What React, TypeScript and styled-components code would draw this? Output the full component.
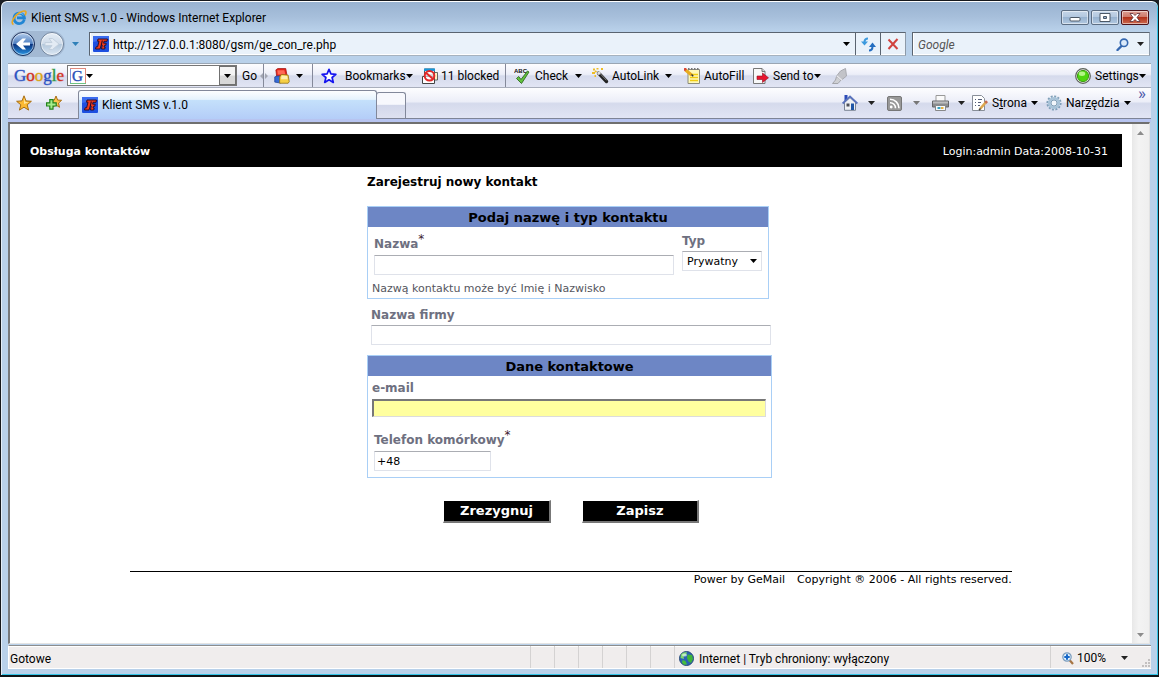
import React from 'react';
import styled, { createGlobalStyle, css } from 'styled-components';

const GlobalStyle = createGlobalStyle`
  *, *::before, *::after { box-sizing: border-box; }
  body { margin: 0; background: #1c2026; }
  button, input, select { font: inherit; color: inherit; margin: 0; }
  button { background: none; border: 0; padding: 0; }
  svg { display: block; flex: none; }
`;

const ui = "Roboto, 'Segoe UI', 'Open Sans', sans-serif";
const page = "'DejaVu Sans', Verdana, sans-serif";

/* ---------- window frame ---------- */

const Window = styled.div`
  display: flex;
  flex-direction: column;
  min-height: 100vh;
  padding: 0 7px 6px;
  border: 1px solid #16181c;
  border-bottom: 2px solid #0c1418;
  border-radius: 7px 7px 0 0;
  background: linear-gradient(#98b2d0 0, #a7bfdb 16px, #b9d1ea 30px);
  box-shadow: inset 0 1px #fff, inset 1px 0 #e4eef8, inset -1px 0 #35c5e8, inset 0 -1px #35c5e8;
  font: 12px/16px ${ui};
  color: #000;
`;

const TitleBar = styled.header`
  display: flex;
  align-items: center;
  gap: 4px;
  height: 30px;
  padding: 3px 2px 0 3px;
`;

const WindowTitle = styled.span`
  flex: 1;
`;

const WindowControls = styled.div`
  display: flex;
  gap: 2px;
`;

const WindowButton = styled.button<{ $close?: boolean }>`
  display: grid;
  place-items: center;
  width: 28px;
  height: 15px;
  border: 1px solid ${p => (p.$close ? '#4d1219' : '#5c6d82')};
  border-radius: 2px;
  background: ${p =>
    p.$close
      ? 'linear-gradient(#dc9f94 0, #cf7a6b 45%, #b3321b 50%, #cc6a50)'
      : 'linear-gradient(#c5d5e7 0, #b3c8df 45%, #98b3d0 50%, #b2c8e0)'};
  box-shadow: inset 0 0 0 1px rgba(255, 255, 255, 0.5);
`;

const NavBar = styled.div`
  display: flex;
  align-items: center;
  height: 26px;
  padding: 0 1px 0 2px;
`;

const TravelButtons = styled.div`
  display: flex;
  align-items: center;
  width: 79px;
`;

const TravelPill = styled.div`
  display: flex;
  gap: 3px;
  border-radius: 14px;
  background: #a3b9d3;
`;

const Plain = styled.button`
  display: grid;
  place-items: center;
`;

const HistoryButton = styled(Plain)`
  width: 20px;
  height: 24px;
`;

const fieldBox = css`
  display: flex;
  align-items: center;
  height: 24px;
  border: 1px solid #5a6470;
  border-right-color: #8d9aa8;
  border-bottom-color: #a6b2be;
  background: #eaf2fa;
  box-shadow: inset 0 -1px #fff, inset 1px 0 #fff;
`;

const AddressBar = styled.div`
  ${fieldBox}
  flex: 1;
  margin-right: 6px;
  padding-left: 3px;
`;

const SearchBar = styled.div`
  ${fieldBox}
  width: 238px;
  padding-left: 5px;
`;

const BarInput = styled.input<{ $hint?: boolean }>`
  flex: 1;
  min-width: 0;
  height: 20px;
  padding: 2px 0 0;
  border: 0;
  outline: 0;
  background: none;
  font-style: ${p => (p.$hint ? 'italic' : 'normal')};
  &::placeholder { color: #555; opacity: 1; }
`;

const AddressInput = styled(BarInput)`
  margin-left: 4px;
`;

const BarButton = styled(Plain)<{ $line?: boolean }>`
  width: ${p => (p.$line ? 25 : 18)}px;
  height: 22px;
  border-left: ${p => (p.$line ? '1px solid #5a6470' : '0')};
`;

/* ---------- toolbars ---------- */

const toolbar = css`
  background: linear-gradient(#fdfdff 0, #eceef8 45%, #d5daec 52%, #e2e5f4 100%);
`;

const GoogleBar = styled.div`
  ${toolbar}
  display: grid;
  grid-template-columns:
    59px 170px 21px 54px 2px 106px 85px 2px 81px 91px 69px 78px 1fr 82px;
  align-items: center;
  height: 25px;
  margin-top: 6px;
  border-top: 1px solid #9aa6b4;
  border-bottom: 1px solid #a9aebc;
`;

const GoogleWord = styled.span`
  padding-left: 6px;
  font: 17px/20px 'Liberation Serif', serif;
  -webkit-text-stroke: 1px;
  paint-order: stroke;
`;

const Letter = styled.span<{ $c: string }>`
  color: ${p => p.$c};
  -webkit-text-stroke-color: ${p => p.$c}66;
`;

const Combo = styled.div`
  display: flex;
  align-items: center;
  height: 21px;
  padding: 1px 0 1px 2px;
  border: 1px solid #777;
  background: #fff;
`;

const ComboButton = styled(Plain)`
  width: 17px;
  height: 19px;
  border: 1px solid #707070;
  background: linear-gradient(#f4f4f4 48%, #d8d8d8 52%);
`;

const ToolButton = styled.button<{ $pad?: number; $gap?: number }>`
  display: flex;
  align-items: center;
  gap: ${p => p.$gap ?? 4}px;
  height: 23px;
  padding-left: ${p => p.$pad ?? 0}px;
  white-space: nowrap;
`;

const Label = styled.span<{ $lead?: boolean }>`
  margin-left: ${p => (p.$lead ? 3 : 0)}px;
`;

const Rule = styled.span`
  width: 1px;
  height: 23px;
  background: #85899a;
`;

const TabBar = styled.div`
  ${toolbar}
  display: flex;
  align-items: flex-end;
  height: 31px;
  border-bottom: 1px solid #7e8496;
`;

const Favorites = styled.div`
  display: flex;
  align-items: center;
  gap: 14px;
  width: 70px;
  height: 30px;
  padding-left: 8px;
`;

const Tab = styled.button`
  display: flex;
  align-items: center;
  gap: 4px;
  width: 299px;
  height: 29px;
  margin-bottom: -1px;
  padding-left: 3px;
  border: 1px solid #82889a;
  border-bottom: 0;
  border-radius: 3px 3px 0 0;
  background: linear-gradient(#fdfeff 0, #e6f3fd 30%, #c4e0fb 34%, #b4cdf8 100%);
`;

const NewTab = styled.button`
  width: 30px;
  height: 26px;
  margin-left: -1px;
  border: 1px solid #82889a;
  border-bottom: 0;
  border-radius: 3px 3px 0 0;
  background: linear-gradient(#f7f8fd 45%, #d2d7ea 50%, #dee1f0);
`;

const Commands = styled.div`
  display: flex;
  justify-content: flex-end;
  flex: 1;
  height: 30px;
`;

const CommandRow = styled.div`
  display: grid;
  grid-template-columns: 45px 45px 40px 74px 92px 13px;
  align-items: center;
`;

const Chevron = styled.span`
  align-self: start;
  font-size: 17px;
  line-height: 10px;
  color: #4a55a8;
`;

const TabStrip = styled.div`
  height: 3px;
  background: #b7c4f0;
`;

/* ---------- document ---------- */

const Viewport = styled.div`
  display: flex;
  flex: 1;
  margin-right: 1px;
  border: 1px solid #8a8a8a;
  border-top: 2px solid #6f6f6f;
  border-left: 2px solid #77797c;
  border-right: 1px solid #e3e3e3;
  border-bottom: 1px solid #e3e3e3;
  background: #fff;
`;

const Scrollbar = styled.div`
  display: flex;
  flex-direction: column;
  justify-content: space-between;
  width: 17px;
  background: linear-gradient(90deg, #e8e8e8, #f3f3f3 40%, #efefef);
`;

const ScrollButton = styled(Plain)`
  height: 17px;
`;

const Document = styled.main`
  flex: 1;
  padding: 10px;
  font: 11px/14px ${page};
`;

const PageHeader = styled.div`
  display: flex;
  align-items: center;
  justify-content: space-between;
  height: 33px;
  padding: 2px 14px 0 10px;
  background: #000;
  color: #fff;
`;

const Form = styled.form`
  width: 408px;
  margin: 0 auto;
`;

const FormTitle = styled.h1`
  margin: 0;
  padding: 8px 0 17px;
  font-size: 12px;
  line-height: 14px;
`;

const Panel = styled.fieldset<{ $wide?: boolean }>`
  width: ${p => (p.$wide ? 405 : 402)}px;
  margin: 0;
  padding: 0;
  border: 1px solid #a9cff6;
`;

const PanelHeader = styled.div`
  height: 20px;
  background: #6d86c5;
  font-size: 13px;
  font-weight: bold;
  line-height: 21px;
  text-align: center;
`;

const FieldRow = styled.div`
  display: flex;
  align-items: flex-start;
  gap: 8px;
  padding: 7px 6px 0;
`;

const Field = styled.div<{ $pad?: string }>`
  display: flex;
  flex-direction: column;
  align-items: flex-start;
  padding: ${p => p.$pad ?? '0'};
`;

const FieldLabel = styled.label<{ $tall?: boolean }>`
  height: ${p => (p.$tall ? 21 : 17)}px;
  padding-top: ${p => (p.$tall ? 3 : 0)}px;
  font-size: 12px;
  font-weight: bold;
  line-height: 14px;
  color: #6e7080;
`;

const Star = styled.sup`
  font-size: 12px;
  font-weight: normal;
  line-height: 0;
  color: #402030;
`;

const TextInput = styled.input<{ $w: number }>`
  width: ${p => p.$w}px;
  height: 20px;
  padding: 0 2px;
  border: 1px solid #dfe2ea;
  border-top-color: #abadb3;
  border-radius: 1px;
  outline: 0;
  background: #fff;
`;

const EmailInput = styled(TextInput)`
  height: 18px;
  margin-top: 1px;
  border-width: 2px 1px 1px 2px;
  border-color: #777 #dcdcdc #dcdcdc #777;
  border-radius: 0;
  background: #ffff9f;
`;

const SelectWrap = styled.div`
  display: grid;
  align-items: center;
  width: 80px;
  height: 20px;
  border: 1px solid #dfe2ea;
  border-top-color: #abadb3;
  & > * { grid-area: 1 / 1; }
  & > svg { justify-self: end; margin-right: 4px; pointer-events: none; }
`;

const Select = styled.select`
  width: 100%;
  height: 18px;
  padding: 1px 0 0 4px;
  border: 0;
  outline: 0;
  appearance: none;
  background: none;
`;

const Hint = styled.p`
  margin: 0;
  padding: 7px 0 2px 4px;
  color: #55565e;
`;

const Actions = styled.div`
  display: flex;
  gap: 31px;
  padding: 22px 0 0 76px;
`;

const ActionButton = styled.button<{ $w: number }>`
  width: ${p => p.$w}px;
  height: 23px;
  border: solid;
  border-width: 1px 2px 2px 1px;
  border-color: #fff #777 #777 #fff;
  background: #000;
  color: #fff;
  font-size: 13px;
  font-weight: bold;
  line-height: 16px;
`;

const PageFooter = styled.footer`
  display: flex;
  justify-content: flex-end;
  gap: 12px;
  width: 80%;
  margin: 48px auto 0;
  padding-top: 1px;
  border-top: 1px solid #000;
`;

/* ---------- status bar ---------- */

const StatusBar = styled.footer`
  display: grid;
  grid-template-columns: 1fr repeat(6, 24px) 376px 101px;
  height: 24px;
  margin-top: 1px;
  border: 1px solid #fff;
  border-top-color: #8d8d8d;
  border-right: 0;
  background: #f0eded;
  box-shadow: inset 0 1px #fff;
`;

const StatusCell = styled.div<{ $first?: boolean }>`
  display: flex;
  align-items: center;
  gap: 5px;
  padding-top: 3px;
  padding-left: ${p => (p.$first ? 1 : 4)}px;
  border-left: ${p => (p.$first ? '0' : '1px solid #d4d2d2')};
`;

const ZoomCell = styled(StatusCell)`
  gap: 3px;
  padding-top: 2px;
  padding-left: 11px;
`;

const ZoomValue = styled.span`
  flex: 1;
`;

/* ---------- icons ---------- */

const Caret = ({ color = '#000', up = false }: { color?: string; up?: boolean }) => (
  <svg width="7" height="4" viewBox="0 0 7 4">
    <path d={up ? 'M0 4h7L3.500 0z' : 'M0 0h7L3.500 4z'} fill={color} />
  </svg>
);

const IeIcon = () => (
  <svg width="16" height="16" viewBox="0 0 16 16">
    <path d="M13.300 9.500A5.200 5.200 0 1 1 13.400 7.800H6" fill="none" stroke="#2186d4" strokeWidth="2.800" />
    <path d="M4 6.500a5 5 0 0 1 8.500-1.500" fill="none" stroke="#8bd0f8" strokeWidth="1" />
    <path d="M2.500 14.500C-1 13 3 6 8 3c3.500-2.200 7-2.800 7-.5 0 1-.5 2-1 2.800" fill="none" stroke="#e9a820" strokeWidth="1.600" />
  </svg>
);

const SiteIcon = () => (
  <svg width="16" height="16" viewBox="0 0 16 16">
    <rect width="16" height="16" rx="1" fill="#1d4fe0" />
    <path d="M0 0h16v3L0 6z" fill="#3a6cf0" />
    <path
      d="M5 3h9.500L14 5.300h-3l-.3 1.900h2.500l-.4 2.100h-1.300L11 11h1.200l-.5 2H8.500l.7-4-.9-.2L7 13H2.500l.6-2.200h1.500L6 5.200H4.500z"
      fill="#f23a1c"
      stroke="#200c28"
      strokeWidth=".9"
    />
    <path d="M9.300 4.500 8.300 9" stroke="#200c28" strokeWidth="1.100" />
  </svg>
);

const TravelIcon = ({ forward = false }: { forward?: boolean }) => (
  <svg width="26" height="26" viewBox="0 0 26 26">
    <defs>
      <linearGradient id={forward ? 'fw' : 'bk'} x2="0" y2="1">
        <stop offset="0" stopColor={forward ? '#e6eef6' : '#b8d0ee'} />
        <stop offset=".48" stopColor={forward ? '#d0dcea' : '#4f7fc0'} />
        <stop offset=".52" stopColor={forward ? '#b4c8dc' : '#0a3480'} />
        <stop offset="1" stopColor={forward ? '#dde8f4' : '#2d9be8'} />
      </linearGradient>
    </defs>
    <circle cx="13" cy="13" r="11.500" fill={`url(#${forward ? 'fw' : 'bk'})`} stroke={forward ? '#71849c' : '#1d2f58'} />
    <circle cx="13" cy="13" r="10.500" fill="none" stroke="#fff" strokeOpacity=".55" />
    <g transform={forward ? 'matrix(-1 0 0 1 26 0)' : undefined}>
      <path
        d="M20 11.500h-7l3-4h-3.500L6 13l6.500 5.500H16l-3-4h7z"
        fill={forward ? '#e3ebf4' : '#fff'}
        stroke={forward ? '#c3d0de' : 'none'}
      />
    </g>
  </svg>
);

const MinimizeIcon = () => (
  <svg width="12" height="9" viewBox="0 0 12 9"><rect x="1" y="4.500" width="10" height="3.500" rx="1" fill="#fff" stroke="#4c5866" /></svg>
);
const RestoreIcon = () => (
  <svg width="12" height="9" viewBox="0 0 12 9"><path d="M1 .5h10v8H1zM4.500 3.500h3v2h-3z" fill="#fff" fillRule="evenodd" stroke="#4c5866" /></svg>
);
const CloseIcon = () => (
  <svg width="12" height="9" viewBox="0 0 12 9"><path d="M1 .5h3l2 2 2-2h3L8 4.500l3 4H8l-2-2-2 2H1l3-4z" fill="#fff" stroke="#5b3038" strokeWidth=".8" /></svg>
);

const RefreshIcon = () => (
  <svg width="15" height="15" viewBox="0 0 15 15">
    <path d="M7 1.500C4.500 1.500 3.500 3 3.500 5" fill="none" stroke="#3d9ade" strokeWidth="2" />
    <path d="M0 4.500h7L3.500 8.500z" fill="#3d9ade" />
    <path d="M8 13.500c2.500 0 3.500-1.500 3.500-4" fill="none" stroke="#246dc0" strokeWidth="2" />
    <path d="M8 10h7l-3.500-4.500z" fill="#246dc0" />
  </svg>
);
const StopIcon = () => (
  <svg width="12" height="12" viewBox="0 0 12 12"><path d="M1.500 1.500 10.500 11M10.500 1 1.500 11" stroke="#d0433f" strokeWidth="2" /></svg>
);
const LensIcon = () => (
  <svg width="13" height="13" viewBox="0 0 13 13">
    <path d="M6 7.500 1.500 12" stroke="#3568b0" strokeWidth="2.400" strokeLinecap="round" />
    <circle cx="8" cy="4.800" r="3.700" fill="#dbeafa" stroke="#3568b0" strokeWidth="1.600" />
  </svg>
);

const GIcon = () => (
  <svg width="16" height="16" viewBox="0 0 16 16">
    <rect width="16" height="16" fill="#fff" />
    <path d="M.5 16V.5" stroke="#7b95e0" />
    <path d="M0 .5h16" stroke="#e08a7d" />
    <path d="M15.500 0v16" stroke="#e08a7d" />
    <path d="M0 15.500h16" stroke="#6fc383" />
    <text x="2" y="13" fontSize="15" fontFamily="Liberation Serif" fill="#2950b8" stroke="#2950b8" strokeWidth=".4">G</text>
  </svg>
);

const GadgetIcon = () => (
  <svg width="16" height="16" viewBox="0 0 17 17">
    <path d="M2 2 4 .6h8.500L14 9l-2 1.500H3z" fill="#e6231c" stroke="#a01510" strokeWidth=".8" />
    <path d="M3.500 2.500H11L12 7H4z" fill="#ff6a55" />
    <path d="M.8 9.500 3 8.500h4v7.500L.8 15z" fill="#356bd6" stroke="#1b3f94" strokeWidth=".8" />
    <path d="m6 9.500 2-2.700 7 .7 1.200 7-1.200 1.700H6z" fill="#f6cf45" stroke="#8e6b10" strokeWidth=".8" />
    <path d="m8 8 6 .4.5 3.600H7.500z" fill="#fdf0b0" />
  </svg>
);

const StarOutline = () => (
  <svg width="16" height="16" viewBox="0 0 16 16">
    <path d="M8 1.300 9.900 5.900l5 .4-3.800 3.200 1.200 4.900L8 11.800l-4.300 2.600 1.200-4.900L1.100 6.300l5-.4z" fill="#fff" stroke="#1414f0" strokeWidth="1.700" strokeLinejoin="round" />
  </svg>
);

const BlockedIcon = () => (
  <svg width="16" height="16" viewBox="0 0 16 16">
    <path d="M.5 8.500h12v7H.500z" fill="#fff" stroke="#444" />
    <path d="M2.500 1h10v6h-10z" fill="#fff" stroke="#444" strokeWidth=".9" />
    <path d="M2 .500h11v2.500H2z" fill="#1796d8" />
    <path d="M12.500 4.500h3v7.500h-3z" fill="#fff0c0" stroke="#444" strokeWidth=".8" />
    <circle cx="7.500" cy="7.800" r="4.800" fill="#fff" fillOpacity=".6" stroke="#e22727" strokeWidth="2" />
    <path d="m4 4.800 7 6.200" stroke="#e22727" strokeWidth="2" />
  </svg>
);

const SpellIcon = () => (
  <svg width="17" height="18" viewBox="0 0 17 18">
    <text x="0" y="6" fontSize="6" fontWeight="bold" fontFamily="Liberation Sans" fill="#111">ABC</text>
    <path d="m2.500 11.500 2.200-2 2.300 3L13.500 4l1.500 1L7.500 16.500z" fill="#63c33f" stroke="#2f6a22" strokeWidth=".9" />
  </svg>
);

const WandIcon = () => (
  <svg width="17" height="16" viewBox="0 0 17 16">
    <path d="m6.500 5 8 8.500" stroke="#222" strokeWidth="3.400" strokeLinecap="round" />
    <path d="m6 4 2 2.200" stroke="#ddd" strokeWidth="3.200" />
    <path d="m8.500 6 6 6.300" stroke="#888" strokeWidth="1" />
    <path d="M1 1.500h2M4.500.5h2M0 5h3M2.500 8H4M9 1h2M3 3l1.500 1" stroke="#edbd26" strokeWidth="1.800" />
  </svg>
);

const AutoFillIcon = () => (
  <svg width="17" height="16" viewBox="0 0 17 16">
    <path d="M4 1.500h11.500v14H4z" fill="#fff8b8" stroke="#8b8b7a" />
    <path d="M4 1h12" stroke="#777" strokeWidth="2" strokeDasharray="1.500 1.500" />
    <path d="M6 6.500h8M6 9.500h8M6 12.500h8" stroke="#f0cb10" strokeWidth="1.400" />
    <path d="m1.500 2 6 5" stroke="#e8ab1e" strokeWidth="3" />
    <path d="m0 .5 2 1.700" stroke="#d84432" strokeWidth="3" />
    <path d="m7.500 6.500 1.700 1.800" stroke="#333" strokeWidth="1.500" />
  </svg>
);

const SendIcon = () => (
  <svg width="16" height="16" viewBox="0 0 16 16">
    <path d="M.5.500H9l3 3v12H.500z" fill="#f8f8f8" stroke="#777" />
    <path d="M9 .500v3h3" fill="#ddd" stroke="#777" />
    <path d="M4 8h5.500V5l6 4.800-6 4.700v-3H4z" fill="#e8152e" stroke="#8d0e20" strokeWidth=".6" />
  </svg>
);

const MarkerIcon = () => (
  <svg width="16" height="16" viewBox="0 0 16 16">
    <path d="M8.500 3 13.500.5l1 7.500-5 4-4.500-4.500z" fill="#c2c3c8" stroke="#a9aab0" />
    <path d="m4.500 8.500 4.500 3.500-3 3.500H.500L3.500 12z" fill="#cfd0d4" stroke="#a4a5aa" />
    <path d="m5 8 5 4.200" stroke="#e8e8ec" strokeWidth="1.300" />
  </svg>
);

const StatusLight = () => (
  <svg width="16" height="16" viewBox="0 0 16 16">
    <circle cx="8" cy="8" r="7.300" fill="#eef0ea" stroke="#5c625a" strokeWidth="1.200" />
    <circle cx="8" cy="8" r="5.600" fill="#4fd60f" stroke="#3a9c12" />
    <ellipse cx="7" cy="5.700" rx="3.200" ry="2.200" fill="#b4f587" />
  </svg>
);

const goldStar = 'M8 .8 10 5.900l5.400.4-4.200 3.500 1.400 5.300L8 12.200l-4.600 2.900 1.400-5.300L.6 6.300 6 5.900z';
const FavoriteIcon = () => (
  <svg width="16" height="16" viewBox="0 0 16 16">
    <path d={goldStar} fill="#fcb932" stroke="#a86e14" strokeLinejoin="round" />
    <path d="M8 3 9.200 7l3.500.3L8 9z" fill="#ffe59a" />
  </svg>
);
const AddFavoriteIcon = () => (
  <svg width="16" height="16" viewBox="0 0 16 16">
    <path d="M10 1 11.600 5l4 .3-3.100 2.800 1 4.200L10 10l-3.600 2.300 1-4.200L4.300 5.300l4-.3z" fill="#fcc44e" stroke="#a86e14" strokeLinejoin="round" />
    <path d="M3.800 4.600h3.200v3.200h3.200v3.200H7v3.200H3.800V11H.6V7.800h3.200z" fill="#a6ec8c" stroke="#23831c" strokeWidth="1.200" />
  </svg>
);

const HomeIcon = () => (
  <svg width="16" height="16" viewBox="0 0 16 16">
    <path d="M2.500 7.500 8 2.500l5.500 5v7.800h-11z" fill="#eef0f4" stroke="#7b8494" />
    <path d="M2.500 0h3v4l-3 2.500z" fill="#2b4bb8" />
    <path d="M.6 8.500 8 1.500l7.400 7" fill="none" stroke="#5972bc" strokeWidth="1.800" />
    <path d="M9 8.500h3v6.500H9z" fill="#1f55a5" />
    <path d="M4.500 8.500h3v3h-3z" fill="#4c4f58" />
  </svg>
);
const FeedIcon = () => (
  <svg width="15" height="15" viewBox="0 0 15 15">
    <rect x=".5" y=".5" width="14" height="14" rx="1.500" fill="#989898" stroke="#777" />
    <circle cx="4.200" cy="11" r="1.400" fill="#fff" />
    <path d="M3 6.700a5.300 5.300 0 0 1 5.500 5.500M3 3.300a9 9 0 0 1 9 9" fill="none" stroke="#fff" strokeWidth="1.600" />
  </svg>
);
const PrinterIcon = () => (
  <svg width="17" height="16" viewBox="0 0 17 16">
    <path d="M4 .500h9v6H4z" fill="#fafafa" stroke="#999" />
    <path d="M.5 6h16v6H.500z" fill="#8a8b8e" stroke="#66676a" />
    <path d="M1 6.500h15v2H1z" fill="#bcbdbf" />
    <path d="M3.500 10.500h10v5h-10z" fill="#f6fafc" stroke="#888" />
    <path d="M5.500 12h3v2h-3z" fill="#36a0c0" /><path d="M9 12h2.500v2H9z" fill="#e6b040" />
  </svg>
);
const PageIcon = () => (
  <svg width="16" height="16" viewBox="0 0 16 16">
    <path d="M.5.500h9l3 3v12H.500z" fill="#fff" stroke="#888e98" />
    <path d="M3 4.500h1M6 4.500h4M3 7.500h1M6 7.500h3M3 10.500h1M6 10.500h2" stroke="#555d78" />
    <path d="m8 14 6.500-7.500" stroke="#dca850" strokeWidth="2.600" />
    <path d="m13.500 7.800 1.500-1.700" stroke="#c76a50" strokeWidth="2.600" />
    <path d="m7 15.300 1.500-1.800" stroke="#444" strokeWidth="1.400" />
  </svg>
);
const GearIcon = () => (
  <svg width="16" height="16" viewBox="0 0 16 16">
    <circle cx="8" cy="8" r="6.600" fill="none" stroke="#7f9fb8" strokeWidth="2" strokeDasharray="2 1.450" />
    <circle cx="8" cy="8" r="4.800" fill="#c8dcec" stroke="#a8c3d8" strokeWidth="2.600" />
    <circle cx="8" cy="8" r="3" fill="#f2f6fb" stroke="#6e8ea8" strokeWidth=".8" />
  </svg>
);
const GlobeIcon = () => (
  <svg width="15" height="15" viewBox="0 0 15 15">
    <circle cx="7.500" cy="7.500" r="7" fill="#2a62b4" stroke="#294a78" />
    <path d="M2 3.500C4 1 6.500.8 8 1.500L7 4 4.500 5.500 5 8 1.500 7z" fill="#7ed66a" />
    <path d="M8.500 3.500 13 4l1 4-2 4-2.500-1.500L8 7z" fill="#3eb43a" />
    <path d="m3.500 9 3 1 1.500 3.500-3 .2-2-2z" fill="#46bd3c" />
    <ellipse cx="5.500" cy="4" rx="2.500" ry="1.600" fill="#e6f7ff" fillOpacity=".65" />
  </svg>
);
const ZoomIcon = () => (
  <svg width="12" height="13" viewBox="0 0 12 13">
    <path d="m7.500 8 3.500 4" stroke="#a77543" strokeWidth="2.200" />
    <circle cx="5" cy="5" r="4.200" fill="#dff0fc" stroke="#7b9cbd" strokeWidth="1.200" />
    <path d="M5 2.300v5.400M2.300 5h5.400" stroke="#1767c8" strokeWidth="2" />
  </svg>
);
const SplitIcon = () => (
  <svg width="8" height="23" viewBox="0 0 8 23">
    <path d="M3.500 0v23" stroke="#85899a" />
    <path d="M3 9 0 12l3 3zM5 9l3 3-3 3z" fill="#a3a6b2" />
  </svg>
);
const GripIcon = () => (
  <svg width="10" height="10" viewBox="0 0 10 10">
    <path d="M7 1h2v2H7zM4 4h2v2H4zM7 4h2v2H7zM1 7h2v2H1zM4 7h2v2H4zM7 7h2v2H7z" fill="#c3c0c0" />
  </svg>
);

const Grip = styled.span`
  align-self: flex-end;
  margin-left: 10px;
`;

/* ---------- screen ---------- */

const wordmark: [string, string][] = [
  ['G', '#2a50c0'], ['o', '#d02f20'], ['o', '#dba414'], ['g', '#2a50c0'], ['l', '#2b9740'], ['e', '#d02f20'],
];

export default function App() {
  return (
    <>
      <GlobalStyle />
      <Window>
        <TitleBar>
          <IeIcon />
          <WindowTitle>Klient SMS v.1.0 - Windows Internet Explorer</WindowTitle>
          <WindowControls>
            <WindowButton aria-label="Minimize"><MinimizeIcon /></WindowButton>
            <WindowButton aria-label="Restore"><RestoreIcon /></WindowButton>
            <WindowButton aria-label="Close" $close><CloseIcon /></WindowButton>
          </WindowControls>
        </TitleBar>

        <NavBar>
          <TravelButtons>
            <TravelPill>
              <Plain aria-label="Back"><TravelIcon /></Plain>
              <Plain aria-label="Forward"><TravelIcon forward /></Plain>
            </TravelPill>
            <HistoryButton aria-label="Recent pages"><Caret color="#2f80b8" /></HistoryButton>
          </TravelButtons>
          <AddressBar>
            <SiteIcon />
            <AddressInput aria-label="Address" defaultValue="http://127.0.0.1:8080/gsm/ge_con_re.php" />
            <BarButton aria-label="Show addresses"><Caret /></BarButton>
            <BarButton aria-label="Refresh" $line><RefreshIcon /></BarButton>
            <BarButton aria-label="Stop" $line><StopIcon /></BarButton>
          </AddressBar>
          <SearchBar>
            <BarInput aria-label="Search" placeholder="Google" $hint />
            <BarButton aria-label="Run search"><LensIcon /></BarButton>
            <BarButton aria-label="Search options"><Caret color="#222" /></BarButton>
          </SearchBar>
        </NavBar>

        <GoogleBar>
          <GoogleWord>
            {wordmark.map(([ch, c], i) => <Letter key={i} $c={c}>{ch}</Letter>)}
          </GoogleWord>
          <Combo>
            <GIcon />
            <Caret />
            <BarInput aria-label="Google search" />
            <ComboButton aria-label="Search history"><Caret /></ComboButton>
          </Combo>
          <ToolButton $pad={5}>Go</ToolButton>
          <ToolButton $pad={2} $gap={6} aria-label="Gadgets"><SplitIcon /><GadgetIcon /><Caret /></ToolButton>
          <Rule />
          <ToolButton $pad={7} $gap={0}><StarOutline /><ToolButton as="span" $pad={8} $gap={0}>Bookmarks<Caret /></ToolButton></ToolButton>
          <ToolButton $pad={2} $gap={3}><BlockedIcon />11 blocked</ToolButton>
          <Rule />
          <ToolButton $pad={7}><SpellIcon />Check<Label $lead><Caret /></Label></ToolButton>
          <ToolButton $pad={4} $gap={3}><WandIcon />AutoLink<Label $lead><Caret /></Label></ToolButton>
          <ToolButton $pad={5} $gap={3}><AutoFillIcon />AutoFill</ToolButton>
          <ToolButton $pad={5}><SendIcon /><ToolButton as="span" $gap={0}>Send to<Caret /></ToolButton></ToolButton>
          <ToolButton $pad={6} aria-label="Highlight"><MarkerIcon /></ToolButton>
          <ToolButton $pad={6}><StatusLight /><ToolButton as="span" $gap={0}>Settings<Caret /></ToolButton></ToolButton>
        </GoogleBar>

        <TabBar>
          <Favorites>
            <Plain aria-label="Favorites"><FavoriteIcon /></Plain>
            <Plain aria-label="Add to favorites"><AddFavoriteIcon /></Plain>
          </Favorites>
          <Tab><SiteIcon />Klient SMS v.1.0</Tab>
          <NewTab aria-label="New tab" />
          <Commands>
            <CommandRow>
              <ToolButton $gap={10} aria-label="Home"><HomeIcon /><Caret color="#222" /></ToolButton>
              <ToolButton $gap={11} aria-label="Feeds"><FeedIcon /><Caret color="#777" /></ToolButton>
              <ToolButton $gap={9} aria-label="Print"><PrinterIcon /><Caret color="#222" /></ToolButton>
              <ToolButton><PageIcon /><span>S<u>t</u>rona</span><Label><Caret /></Label></ToolButton>
              <ToolButton><GearIcon /><span>Nar<u>z</u>ędzia</span><Label><Caret /></Label></ToolButton>
              <Chevron>»</Chevron>
            </CommandRow>
          </Commands>
        </TabBar>
        <TabStrip />

        <Viewport>
          <Document>
            <PageHeader>
              <strong>Obsługa kontaktów</strong>
              <span>Login:admin Data:2008-10-31</span>
            </PageHeader>
            <Form onSubmit={e => e.preventDefault()}>
              <FormTitle>Zarejestruj nowy kontakt</FormTitle>
              <Panel>
                <PanelHeader>Podaj nazwę i typ kontaktu</PanelHeader>
                <FieldRow>
                  <Field>
                    <FieldLabel $tall htmlFor="name">Nazwa<Star>*</Star></FieldLabel>
                    <TextInput $w={300} id="name" />
                  </Field>
                  <Field>
                    <FieldLabel htmlFor="type">Typ</FieldLabel>
                    <SelectWrap>
                      <Select id="type" defaultValue="Prywatny"><option>Prywatny</option></Select>
                      <Caret />
                    </SelectWrap>
                  </Field>
                </FieldRow>
                <Hint>Nazwą kontaktu może być Imię i Nazwisko</Hint>
              </Panel>
              <Field $pad="9px 0 10px 4px">
                <FieldLabel htmlFor="company">Nazwa firmy</FieldLabel>
                <TextInput $w={400} id="company" />
              </Field>
              <Panel $wide>
                <PanelHeader>Dane kontaktowe</PanelHeader>
                <Field $pad="5px 0 0 4px">
                  <FieldLabel htmlFor="email">e-mail</FieldLabel>
                  <EmailInput $w={394} id="email" />
                </Field>
                <Field $pad="13px 0 6px 6px">
                  <FieldLabel $tall htmlFor="phone">Telefon komórkowy<Star>*</Star></FieldLabel>
                  <TextInput $w={117} id="phone" defaultValue="+48" />
                </Field>
              </Panel>
              <Actions>
                <ActionButton $w={108} type="button">Zrezygnuj</ActionButton>
                <ActionButton $w={117} type="submit">Zapisz</ActionButton>
              </Actions>
            </Form>
            <PageFooter>
              <span>Power by GeMail</span>
              <span>Copyright ® 2006 - All rights reserved.</span>
            </PageFooter>
          </Document>
          <Scrollbar>
            <ScrollButton aria-label="Scroll up"><Caret up color="#8c8c8c" /></ScrollButton>
            <ScrollButton aria-label="Scroll down"><Caret color="#8c8c8c" /></ScrollButton>
          </Scrollbar>
        </Viewport>

        <StatusBar>
          <StatusCell $first>Gotowe</StatusCell>
          <StatusCell /><StatusCell /><StatusCell /><StatusCell /><StatusCell /><StatusCell />
          <StatusCell><GlobeIcon />Internet | Tryb chroniony: wyłączony</StatusCell>
          <ZoomCell>
            <ZoomIcon />
            <ZoomValue>100%</ZoomValue>
            <Caret color="#222" />
            <Grip><GripIcon /></Grip>
          </ZoomCell>
        </StatusBar>
      </Window>
    </>
  );
}
